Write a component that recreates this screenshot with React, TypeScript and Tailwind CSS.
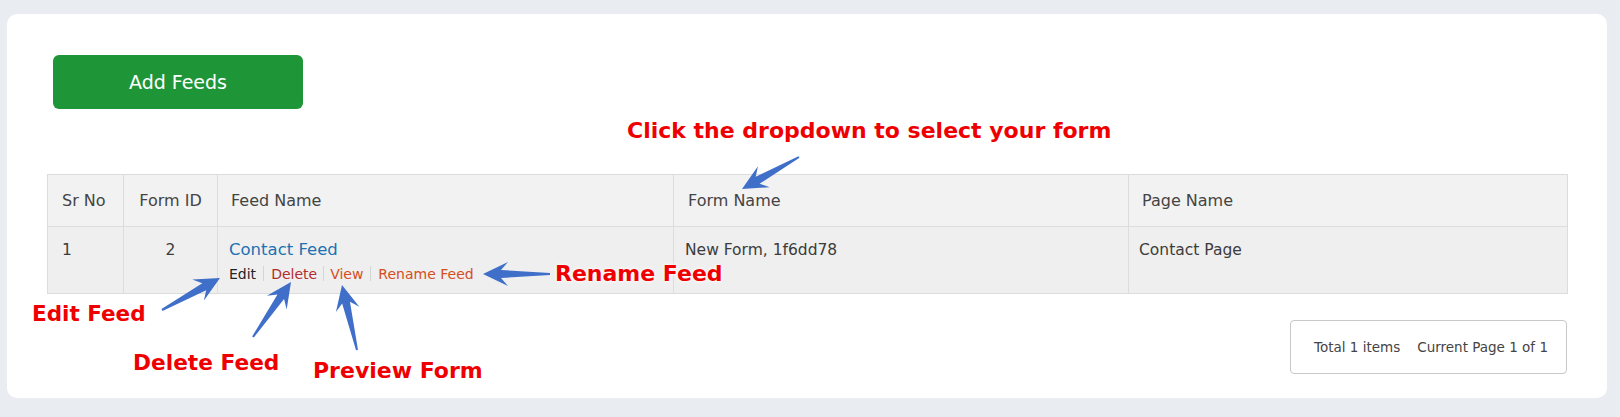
import React from "react";

type Pt = [number, number];

const arrows: { tail: Pt; tip: Pt }[] = [
  { tail: [799, 157], tip: [742, 189] },
  { tail: [550, 274], tip: [483, 274] },
  { tail: [162, 310], tip: [220, 278] },
  { tail: [253, 337], tip: [291, 282] },
  { tail: [357, 350], tip: [342, 285] },
];

function arrowPoints(tail: Pt, tip: Pt) {
  const dx = tip[0] - tail[0];
  const dy = tip[1] - tail[1];
  const len = Math.hypot(dx, dy);
  const ux = dx / len;
  const uy = dy / len;
  const nx = -uy;
  const ny = ux;
  const hl = 25;
  const hw = 12;
  const at = (d: number, w: number): string =>
    `${tip[0] - ux * d + nx * w},${tip[1] - uy * d + ny * w}`;
  return [
    at(len, 1),
    at(hl * 0.72, 4),
    at(hl, hw),
    at(0, 0),
    at(hl, -hw),
    at(hl * 0.72, -4),
    at(len, -1),
  ].join(" ");
}

const labels = [
  { text: "Click the dropdown to select your form", cls: "left-[627px] top-[120px] text-[22px]" },
  { text: "Rename Feed", cls: "left-[555px] top-[263px] text-[22px]" },
  { text: "Edit Feed", cls: "left-[32px] top-[303px] text-[21.5px]" },
  { text: "Delete Feed", cls: "left-[133px] top-[352px] text-[21.7px]" },
  { text: "Preview Form", cls: "left-[313px] top-[360px] text-[22px]" },
];

function Actions() {
  return (
    <div className="mt-[6px] flex items-center text-[14px] leading-none">
      <span className="text-[#1d2327]">Edit</span>
      <span className="mx-[7px] h-[15px] border-l border-[#d5d5d5]" />
      <span className="text-[#b32d2e]">Delete</span>
      <span className="mx-[6px] h-[15px] border-l border-[#d5d5d5]" />
      <span className="text-[#d54e21]">View</span>
      <span className="mx-[7px] h-[15px] border-l border-[#d5d5d5]" />
      <span className="text-[#d54e21]">Rename Feed</span>
    </div>
  );
}

export default function App() {
  return (
    <div
      className="relative h-[417px] w-[1620px] overflow-hidden bg-[#e9ecf0] pl-[7px] pt-[14px]"
      style={{ fontFamily: '"DejaVu Sans", sans-serif' }}
    >
      <div className="h-[384px] w-[1600px] rounded-[10px] bg-white px-[40px] pt-[41px]">
        <button className="ml-[6px] flex h-[54px] w-[250px] items-center justify-center rounded-[6px] bg-[#1e9637] text-[19px] text-white">
          Add Feeds
        </button>

        <table className="mt-[65px] w-[1520px] table-fixed border-collapse text-[#444]">
          <colgroup>
            <col className="w-[76px]" />
            <col className="w-[94px]" />
            <col className="w-[456px]" />
            <col className="w-[455px]" />
            <col className="w-[439px]" />
          </colgroup>
          <thead>
            <tr className="h-[52px] bg-[#f2f2f2] text-[16px]">
              <th className="border border-[#dcdcdc] pl-[14px] text-left font-normal">Sr No</th>
              <th className="border border-[#dcdcdc] text-center font-normal">Form ID</th>
              <th className="border border-[#dcdcdc] pl-[13px] text-left font-normal">Feed Name</th>
              <th className="border border-[#dcdcdc] pl-[14px] text-left font-normal">Form Name</th>
              <th className="border border-[#dcdcdc] pl-[13px] text-left font-normal">Page Name</th>
            </tr>
          </thead>
          <tbody>
            <tr className="h-[67px] bg-[#efefef] align-top text-[15.5px] text-[#3c3c3c]">
              <td className="border border-[#dcdcdc] pl-[14px] pt-[14px] leading-[18px]">1</td>
              <td className="border border-[#dcdcdc] pt-[14px] text-center leading-[18px]">2</td>
              <td className="border border-[#dcdcdc] pl-[11px] pt-[13px]">
                <div className="text-[16.5px] leading-[20px] text-[#2271b1]">Contact Feed</div>
                <Actions />
              </td>
              <td className="border border-[#dcdcdc] pl-[11px] pt-[14px] leading-[18px]">New Form, 1f6dd78</td>
              <td className="border border-[#dcdcdc] pl-[10px] pt-[14px] leading-[18px]">Contact Page</td>
            </tr>
          </tbody>
        </table>

        <div className="mt-[26px] flex justify-end">
          <div className="flex h-[54px] w-[277px] items-center gap-[17px] rounded-[4px] border border-[#c8c8c8] pl-[23px] text-[13.5px] text-[#444]">
            <span>Total 1 items</span>
            <span>Current Page 1 of 1</span>
          </div>
        </div>
      </div>

      <svg className="pointer-events-none absolute left-0 top-0" width="1620" height="417">
        {arrows.map((a, i) => (
          <polygon key={i} points={arrowPoints(a.tail, a.tip)} fill="#3f6fc9" />
        ))}
      </svg>

      {labels.map((l) => (
        <span
          key={l.text}
          className={`absolute whitespace-nowrap font-bold leading-none text-[#ee0000] [text-shadow:0_0_2px_#fff,0_0_4px_#fff] ${l.cls}`}
        >
          {l.text}
        </span>
      ))}
    </div>
  );
}
